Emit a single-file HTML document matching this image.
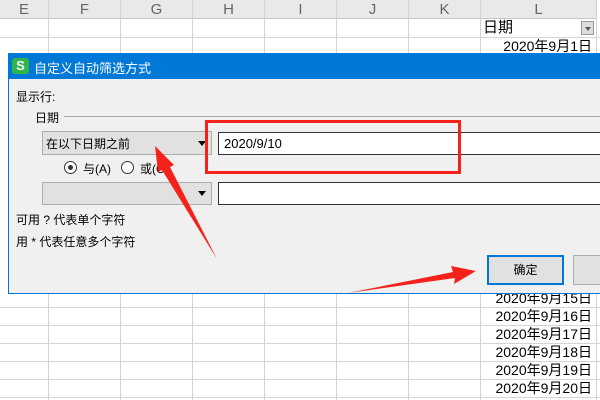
<!DOCTYPE html>
<html><head><meta charset="utf-8"><style>
body{margin:0;width:600px;height:400px;overflow:hidden;background:#fff;position:relative;font-family:"Liberation Sans","Noto Sans CJK SC",sans-serif;}
.a{position:absolute}
.hd{position:absolute;top:0;height:19px;background:#e9e9e9;border-right:1px solid #d4d4d4;border-bottom:1px solid #c8c8c8;box-sizing:border-box;text-align:center;font-size:15px;line-height:19px;color:#666}
.vl{position:absolute;top:19px;width:1px;height:381px;background:#d4d4d4}
.hl{position:absolute;left:0;width:600px;height:1px;background:#d4d4d4}
.dt{position:absolute;right:8px;font-size:14px;line-height:18px;color:#000}
.t{position:absolute;font-size:12px;color:#000;white-space:nowrap}
</style></head><body>
<div class="hd" style="left:0;width:49px">E</div>
<div class="hd" style="left:49px;width:72px">F</div>
<div class="hd" style="left:121px;width:72px">G</div>
<div class="hd" style="left:193px;width:72px">H</div>
<div class="hd" style="left:265px;width:72px">I</div>
<div class="hd" style="left:337px;width:72px">J</div>
<div class="hd" style="left:409px;width:72px">K</div>
<div class="hd" style="left:481px;width:116px">L</div>
<div class="vl" style="left:48px"></div><div class="vl" style="left:120px"></div><div class="vl" style="left:192px"></div><div class="vl" style="left:264px"></div><div class="vl" style="left:336px"></div><div class="vl" style="left:408px"></div><div class="vl" style="left:480px"></div><div class="vl" style="left:596px"></div>
<div class="hl" style="top:37px"></div><div class="hl" style="top:307px"></div><div class="hl" style="top:325px"></div><div class="hl" style="top:343px"></div><div class="hl" style="top:361px"></div><div class="hl" style="top:379px"></div><div class="hl" style="top:397px"></div>
<div class="a" style="left:483px;top:19px;font-size:15px;line-height:18px">日期</div>
<div class="a" style="left:581px;top:21px;width:13px;height:14px;background:#ddd;border:1px solid #999;box-sizing:border-box"><div class="a" style="left:3px;top:5px;border-left:3px solid transparent;border-right:3px solid transparent;border-top:4px solid #555"></div></div>
<div class="dt" style="top:37px">2020年9月1日</div>
<div class="dt" style="top:289px">2020年9月15日</div>
<div class="dt" style="top:307px">2020年9月16日</div>
<div class="dt" style="top:325px">2020年9月17日</div>
<div class="dt" style="top:343px">2020年9月18日</div>
<div class="dt" style="top:361px">2020年9月19日</div>
<div class="dt" style="top:379px">2020年9月20日</div>
<!-- dialog -->
<div class="a" style="left:8px;top:53px;width:600px;height:241px;background:#f0f0f0;border:1px solid #0078d7;box-sizing:border-box"></div>
<div class="a" style="left:8px;top:53px;width:600px;height:26px;background:#0078d7"></div>
<div class="a" style="left:12px;top:58px;width:17px;height:16px;background:#2fb54a;border-radius:3px;color:#fff;font-size:13px;font-weight:bold;text-align:center;line-height:16px">S</div>
<div class="t" style="left:34px;top:58px;color:#fff;font-size:13px">自定义自动筛选方式</div>
<div class="t" style="left:16px;top:88px">显示行:</div>
<div class="t" style="left:35px;top:109px">日期</div>
<div class="a" style="left:64px;top:116px;width:540px;height:1px;background:#aaa"></div>
<div class="a" style="left:42px;top:131px;width:170px;height:24px;background:#e1e1e1;border:1px solid #adadad;box-sizing:border-box"></div>
<div class="t" style="left:46px;top:135px">在以下日期之前</div>
<div class="a" style="left:198px;top:141px;border-left:4px solid transparent;border-right:4px solid transparent;border-top:5px solid #000"></div>
<div class="a" style="left:218px;top:132px;width:390px;height:23px;background:#fff;border:1px solid #333;box-sizing:border-box"></div>
<div class="t" style="left:224px;top:136px;font-size:13px">2020/9/10</div>
<div class="a" style="left:64px;top:161px;width:13px;height:13px;border:1px solid #333;border-radius:50%;box-sizing:border-box;background:#fff"><div class="a" style="left:3px;top:3px;width:5px;height:5px;background:#333;border-radius:50%"></div></div>
<div class="t" style="left:83px;top:160px">与(A)</div>
<div class="a" style="left:121px;top:161px;width:13px;height:13px;border:1px solid #333;border-radius:50%;box-sizing:border-box;background:#fff"></div>
<div class="t" style="left:140px;top:160px">或(C</div>
<div class="a" style="left:42px;top:182px;width:170px;height:23px;background:#e1e1e1;border:1px solid #adadad;box-sizing:border-box"></div>
<div class="a" style="left:198px;top:191px;border-left:4px solid transparent;border-right:4px solid transparent;border-top:5px solid #000"></div>
<div class="a" style="left:218px;top:182px;width:390px;height:23px;background:#fff;border:1px solid #333;box-sizing:border-box"></div>
<div class="t" style="left:16px;top:211px">可用 ? 代表单个字符</div>
<div class="t" style="left:16px;top:233px">用 * 代表任意多个字符</div>
<div class="a" style="left:487px;top:255px;width:77px;height:30px;background:#e1e1e1;border:2px solid #0078d7;box-sizing:border-box;text-align:center;font-size:12px;line-height:26px">确定</div>
<div class="a" style="left:573px;top:255px;width:40px;height:30px;background:#e1e1e1;border:1px solid #adadad;box-sizing:border-box"></div>
<div class="a" style="left:205px;top:120px;width:256px;height:54px;border:3px solid #f5221b;box-sizing:border-box"></div>
<svg class="a" style="left:0;top:0" width="600" height="400">
<polygon fill="#f5221b" points="155,146 174,165 170,167 217,259 162,170 158,172"/>
<polygon fill="#f5221b" points="476,271 454,284 455,278 348,293 453,272 451,266"/>
</svg>
</body></html>
